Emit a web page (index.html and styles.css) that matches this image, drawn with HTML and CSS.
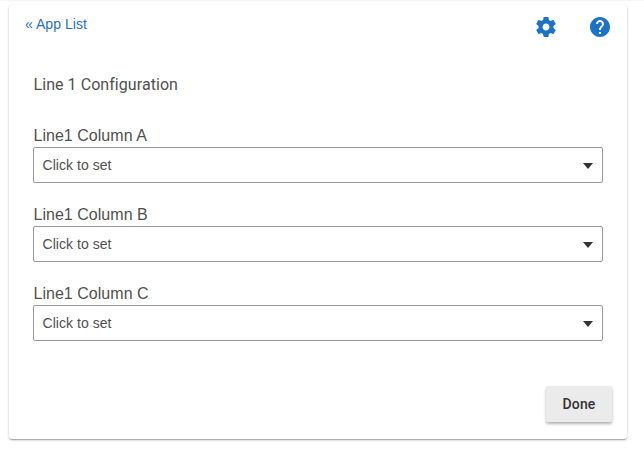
FILE: index.html
```html
<!DOCTYPE html>
<html lang="en">
<head>
<meta charset="utf-8">
<title>Line 1 Configuration</title>
<link rel="stylesheet" href="styles.css">
</head>
<body>
<main class="card">
  <header class="toolbar">
    <a class="back">« App List</a>
    <div class="actions">
      <svg class="icon" viewBox="0 0 24 24"><path d="M19.43 12.98c.04-.32.07-.64.07-.98s-.03-.66-.07-.98l2.11-1.65c.19-.15.24-.42.12-.64l-2-3.46c-.12-.22-.39-.3-.61-.22l-2.49 1c-.52-.4-1.08-.73-1.69-.98l-.38-2.65C14.46 2.18 14.25 2 14 2h-4c-.25 0-.46.18-.49.42l-.38 2.65c-.61.25-1.17.59-1.69.98l-2.49-1c-.23-.09-.49 0-.61.22l-2 3.46c-.13.22-.07.49.12.64l2.11 1.65c-.04.32-.07.65-.07.98s.03.66.07.98l-2.11 1.65c-.19.15-.24.42-.12.64l2 3.46c.12.22.39.3.61.22l2.49-1c.52.4 1.08.73 1.69.98l.38 2.65c.03.24.24.42.49.42h4c.25 0 .46-.18.49-.42l.38-2.65c.61-.25 1.17-.59 1.69-.98l2.49 1c.23.09.49 0 .61-.22l2-3.46c.12-.22.07-.49-.12-.64l-2.11-1.65zM12 15.500c-1.930 0-3.500-1.570-3.500-3.500s1.570-3.500 3.500-3.500 3.500 1.570 3.500 3.500-1.570 3.500-3.500 3.500z"/></svg>
      <svg class="icon" viewBox="0 0 24 24"><path d="M12 2C6.480 2 2 6.480 2 12s4.480 10 10 10 10-4.480 10-10S17.520 2 12 2zm1 17h-2v-2h2v2zm2.070-7.750l-.9.920C13.450 12.900 13 13.500 13 15h-2v-.5c0-1.100.45-2.100 1.170-2.830l1.240-1.260c.37-.36.59-.86.59-1.410 0-1.100-.9-2-2-2s-2 .9-2 2H8c0-2.210 1.790-4 4-4s4 1.790 4 4c0 .88-.36 1.680-.93 2.250z"/></svg>
    </div>
  </header>
  <h1 class="title">Line 1 Configuration</h1>
  <section class="field">
    <div class="label">Line1 Column A</div>
    <div class="select"><span>Click to set</span><i class="arrow"></i></div>
  </section>
  <section class="field">
    <div class="label">Line1 Column B</div>
    <div class="select"><span>Click to set</span><i class="arrow"></i></div>
  </section>
  <section class="field">
    <div class="label">Line1 Column C</div>
    <div class="select"><span>Click to set</span><i class="arrow"></i></div>
  </section>
  <footer class="footer"><button class="done">Done</button></footer>
</main>
</body>
</html>
```
FILE: styles.css
```css
* { box-sizing: border-box; }
body {
  margin: 0;
  padding: 4px 17px 18px 9px;
  height: 457px;
  overflow: hidden;
  background: #fff;
  border-top: 1px solid #f5f5f5;
  font-family: "Liberation Sans", Arial, sans-serif;
  color: #505050;
}
.card {
  height: 434px;
  background: #fff;
  border-radius: 3px;
  box-shadow: 0 1px 3px rgba(0, 0, 0, .2), 0 1px 1px rgba(0, 0, 0, .14), 0 2px 1px -1px rgba(0, 0, 0, .12);
}
.toolbar {
  display: flex;
  justify-content: space-between;
  height: 64px;
  padding: 10px 15px 0 16px;
}
.back {
  font: 14px/18px "Liberation Sans", Arial, sans-serif;
  letter-spacing: .04px;
  color: #1f72c4;
}
.actions { display: flex; gap: 30px; }
.icon { width: 24px; height: 24px; fill: #1a73c9; }
.title {
  margin: 0 0 23px 24.500px;
  font: 400 16px/32px Roboto, sans-serif;
  letter-spacing: .06px;
}
.field { height: 79px; padding: 0 24px; }
.label {
  height: 23px;
  padding-left: .5px;
  font-size: 16px;
  line-height: 24px;
  letter-spacing: .03px;
}
.select {
  display: flex;
  align-items: center;
  justify-content: space-between;
  height: 36px;
  padding: 0 9px 0 8.500px;
  border: 1px solid #999;
  border-radius: 2px;
  font-size: 14px;
  letter-spacing: .04px;
}
.arrow {
  margin-top: 2px;
  border: 5.500px solid transparent;
  border-top: 6px solid #333;
  border-bottom: 0;
}
.footer { display: flex; justify-content: flex-end; padding: 26px 15px 0; }
.done {
  width: 66px;
  height: 36px;
  margin-top: -1px;
  border: 0;
  border-radius: 2px;
  background: #ebebeb;
  color: #333;
  font: 500 14px Roboto, sans-serif;
  letter-spacing: .1px;
  box-shadow: 0 2px 3px rgba(0, 0, 0, .3);
}
```
